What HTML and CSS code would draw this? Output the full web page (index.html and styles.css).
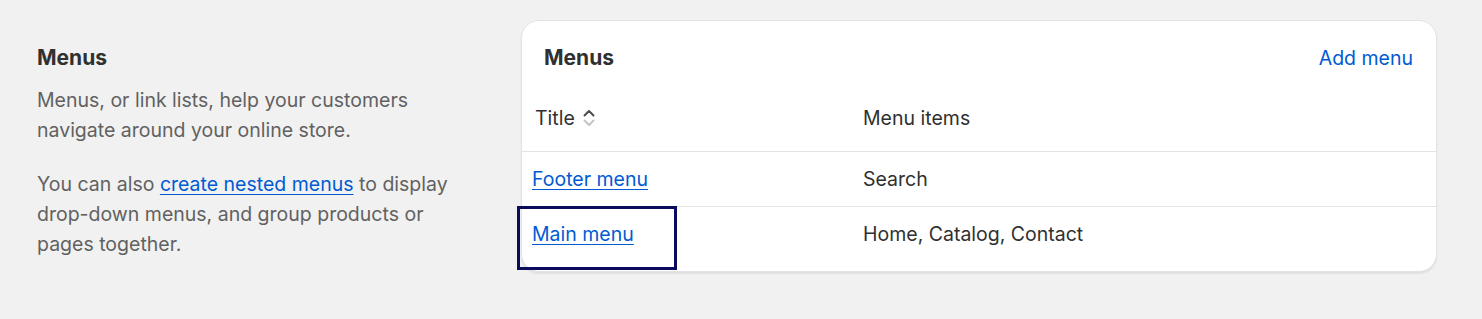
FILE: index.html
```html
<!DOCTYPE html>
<html lang="en">
<head>
<meta charset="utf-8">
<title>Menus</title>
<link rel="stylesheet" href="styles.css">
</head>
<body>
<div class="page">
  <section class="intro">
    <h2 class="intro-title">Menus</h2>
    <p class="intro-text">Menus, or link lists, help your customers navigate around your online store.</p>
    <p class="intro-text">You can also <a href="#" class="link">create nested menus</a> to display drop-down menus, and group products or pages together.</p>
  </section>
  <section class="card">
    <div class="card-header">
      <h2 class="card-title">Menus</h2>
      <a href="#" class="add-link">Add menu</a>
    </div>
    <table class="menu-table">
      <thead>
        <tr>
          <th class="col-title"><span class="sort">Title
            <svg class="sort-icon" width="14" height="20" viewBox="0 0 14 20" aria-hidden="true">
              <path d="M2.5 7.5 L7 3 L11.5 7.5" fill="none" stroke="#4a4a4a" stroke-width="1.9" stroke-linecap="round" stroke-linejoin="round"/>
              <path d="M2.5 12.5 L7 17 L11.5 12.5" fill="none" stroke="#c4c4c4" stroke-width="1.9" stroke-linecap="round" stroke-linejoin="round"/>
            </svg></span></th>
          <th class="col-items">Menu items</th>
        </tr>
      </thead>
      <tbody>
        <tr>
          <td class="cell-link"><a href="#" class="link">Footer menu</a></td>
          <td class="cell-items">Search</td>
        </tr>
        <tr>
          <td class="cell-link focus-cell"><a href="#" class="link">Main menu</a><span class="focus-ring"></span></td>
          <td class="cell-items">Home, Catalog, Contact</td>
        </tr>
      </tbody>
    </table>
  </section>
</div>
</body>
</html>
```

FILE: styles.css
```css
* {
  box-sizing: border-box;
}

html, body {
  margin: 0;
  padding: 0;
  background: #f1f1f1;
  font-family: Inter, "Noto Sans", "Liberation Sans", sans-serif;
  color: #303030;
}

.page {
  display: flex;
  align-items: flex-start;
  gap: 44px;
  padding: 20px 45px 0 37px;
}

.intro {
  flex: 0 0 440px;
  padding-top: 23px;
}

.intro-title {
  margin: 0 0 12px;
  font-size: 21px;
  line-height: 30px;
  font-weight: 650;
  color: #303030;
}

.intro-text {
  margin: 0 0 24px;
  font-size: 19.5px;
  line-height: 30px;
  color: #616161;
}

.link {
  color: #005bd3;
  text-decoration: underline;
  text-underline-offset: 3px;
  text-decoration-thickness: 1px;
}

.card {
  flex: 1 1 auto;
  background: #ffffff;
  border: 1px solid #e3e3e3;
  border-radius: 18px;
  box-shadow: 0 2px 2px rgba(0, 0, 0, 0.07);
  padding-bottom: 10px;
}

.card-header {
  display: flex;
  justify-content: space-between;
  align-items: center;
  padding: 22px 23px 0 22px;
}

.card-title {
  margin: 0;
  font-size: 21px;
  line-height: 30px;
  font-weight: 650;
  color: #303030;
}

.add-link {
  font-size: 19.5px;
  line-height: 30px;
  color: #005bd3;
  text-decoration: none;
}

.menu-table {
  width: 100%;
  border-collapse: collapse;
  margin-top: 12px;
  font-size: 19.5px;
  line-height: 30px;
}

.menu-table th {
  text-align: left;
  font-weight: 400;
  color: #303030;
  height: 66px;
  border-bottom: 1px solid #e3e3e3;
  vertical-align: middle;
}

.col-title {
  width: 328px;
  padding: 0 0 0 13px;
}

.col-items,
.cell-items {
  padding: 0 0 0 13px;
}

.sort {
  display: inline-flex;
  align-items: center;
  gap: 7px;
}

.sort-icon {
  display: block;
}

.menu-table td {
  height: 55px;
  vertical-align: middle;
  color: #303030;
}

.menu-table tbody tr + tr td {
  border-top: 1px solid #e3e3e3;
}

.cell-link {
  padding: 0 0 0 10px;
}

.focus-cell {
  position: relative;
}

.focus-ring {
  position: absolute;
  left: -5px;
  top: -1px;
  width: 160px;
  height: 64px;
  border: 3px solid #0b0b5e;
  pointer-events: none;
}
```
